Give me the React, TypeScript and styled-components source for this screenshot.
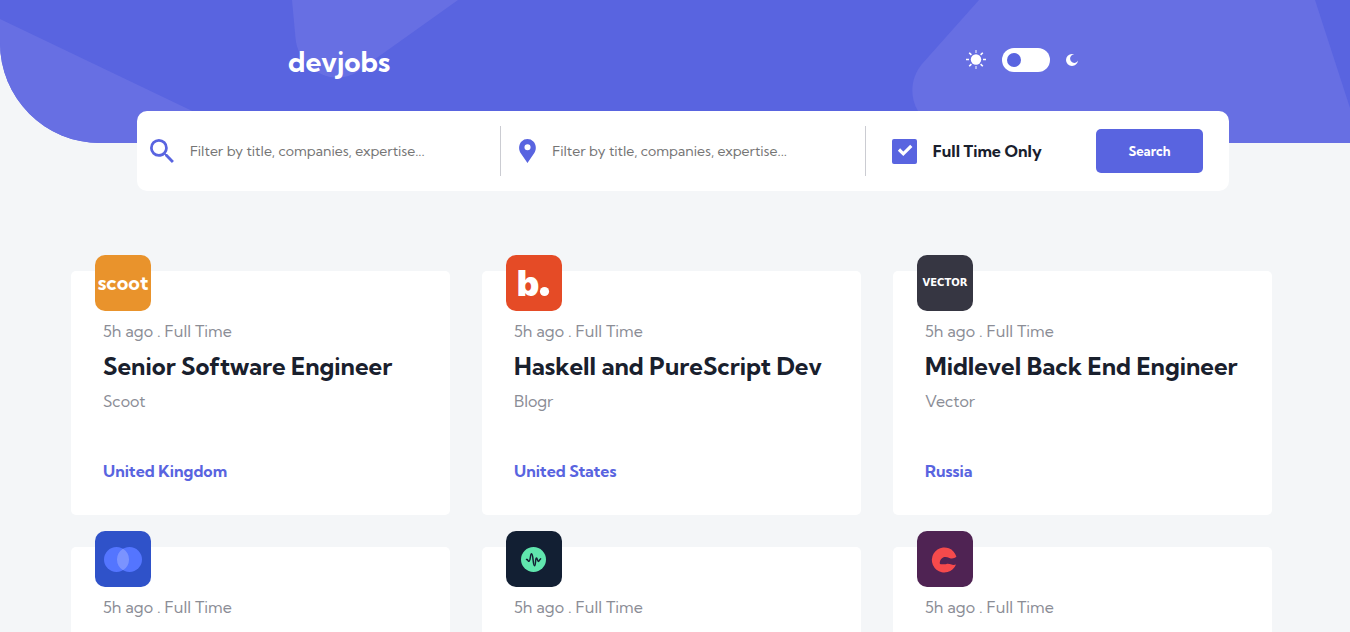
import React, { useState } from "react";
import styled, { createGlobalStyle } from "styled-components";

const GlobalStyle = createGlobalStyle`
  *, *::before, *::after { box-sizing: border-box; }
  body {
    margin: 0;
    background: #f4f6f8;
    color: #19202d;
    font-family: "Kumbh Sans", Lato, "Liberation Sans", sans-serif;
    font-size: 16px;
  }
  h1, h2, p { margin: 0; }
`;

const Page = styled.div`
  min-height: 100vh;
`;

const Header = styled.header`
  position: relative;
  display: flex;
  justify-content: space-between;
  align-items: flex-start;
  height: 143px;
  padding: 44px 272px 0 288px;
  overflow: hidden;
  background: #5964e0;
  border-bottom-left-radius: 100px;
`;

const HeaderPattern = styled.svg`
  position: absolute;
  inset: 0;
  width: 100%;
  height: 100%;
  fill: #676fe3;
`;

const Brand = styled.h1`
  position: relative;
  font-size: 28px;
  line-height: 36px;
  font-weight: 700;
  color: #fff;
`;

const ThemeControl = styled.div`
  position: relative;
  display: flex;
  align-items: center;
  gap: 16px;
  height: 32px;
`;

const Switch = styled.input`
  appearance: none;
  display: flex;
  align-items: center;
  width: 48px;
  height: 24px;
  margin: 0;
  padding: 0 5px;
  border-radius: 12px;
  background: #fff;
  cursor: pointer;

  &::before {
    content: "";
    width: 14px;
    height: 14px;
    border-radius: 50%;
    background: #5964e0;
  }
  &:checked { justify-content: flex-end; }
`;

const SearchBar = styled.form`
  position: relative;
  display: grid;
  grid-template-columns: minmax(0, 1fr) 1px minmax(0, 1fr) 1px minmax(0, 1fr);
  align-items: center;
  height: 80px;
  margin: -32px 121px 0 137px;
  background: #fff;
  border-radius: 10px;
`;

const Divider = styled.span`
  height: 50px;
  background: #cbccd2;
`;

const Field = styled.label<{ $inset: number }>`
  display: flex;
  align-items: center;
  gap: 16px;
  padding-left: ${({ $inset }) => $inset}px;
  svg { flex: none; }
`;

const TextInput = styled.input`
  flex: 1;
  min-width: 0;
  height: 40px;
  padding: 0;
  border: 0;
  outline: 0;
  background: transparent;
  font: inherit;
  font-size: 14px;
  color: #19202d;
  &::placeholder { color: #757575; opacity: 1; }
`;

const Actions = styled.div`
  display: flex;
  align-items: center;
  justify-content: space-between;
  padding: 0 26px;
`;

const CheckLabel = styled.label`
  display: flex;
  align-items: center;
  gap: 16px;
  font-weight: 700;
  line-height: 24px;
  cursor: pointer;
`;

const CheckFrame = styled.span`
  display: grid;
  width: 25px;
  height: 25px;
  > * { grid-area: 1 / 1; }
  svg { pointer-events: none; }
`;

const CheckInput = styled.input`
  appearance: none;
  width: 25px;
  height: 25px;
  margin: 0;
  border-radius: 2px;
  background: #e8e9ed;
  &:checked { background: #5964e0; }
`;

const SearchButton = styled.button`
  width: 107px;
  height: 44px;
  border: 0;
  border-radius: 5px;
  background: #5964e0;
  color: #fff;
  font: inherit;
  font-size: 13px;
  font-weight: 700;
  cursor: pointer;
`;

const JobGrid = styled.main`
  display: grid;
  grid-template-columns: repeat(3, minmax(0, 1fr));
  gap: 32px;
  padding: 80px 78px 32px 71px;
`;

const Card = styled.article`
  position: relative;
  padding: 48px 32px 32px;
  background: #fff;
  border-radius: 5px;
`;

const Badge = styled.div<{ $color: string }>`
  position: absolute;
  top: -16px;
  left: 24px;
  width: 56px;
  height: 56px;
  overflow: hidden;
  border-radius: 10px;
  background: ${({ $color }) => $color};
  svg { display: block; }
`;

const Meta = styled.p`
  color: #8b8d96;
  line-height: 24px;
`;

const Title = styled.h2`
  margin: 8px 0;
  font-size: 24px;
  line-height: 30px;
  font-weight: 700;
`;

const Location = styled.p`
  margin-top: 46px;
  color: #5964e0;
  font-weight: 700;
  line-height: 24px;
`;

const SunIcon = () => (
  <svg width="20" height="20" viewBox="0 0 20 20" aria-hidden="true">
    <circle cx="10" cy="9.5" r="5.2" fill="#fff" />
    <g stroke="#fff" strokeWidth="1.6">
      <path d="M0 9.500h3M17 9.500h3M3.200 2.700l2.200 2.200M16.800 2.700l-2.200 2.200M3.200 16.300l2.200-2.200M16.800 16.300l-2.200-2.200" />
      <path d="M10 0v3M10 16v3" opacity=".6" />
    </g>
  </svg>
);

const MoonIcon = () => (
  <svg width="12" height="12" viewBox="0 0 12 12" aria-hidden="true">
    <path
      fill="#fff"
      d="M6 0c1.100 0 1.800.2 2.400.5C6 .3 4.100 2 4.100 4.600c0 2.500 1.800 4.300 4.100 4.300 1.700 0 3-.9 3.700-2.300C11.800 9.700 9.200 12 6 12a6 6 0 0 1 0-12z"
    />
  </svg>
);

const SearchIcon = () => (
  <svg width="24" height="24" viewBox="0 0 24 24" aria-hidden="true">
    <path
      fill="#5964e0"
      d="M17.112 15.059h-1.088l-.377-.377a8.814 8.814 0 0 0 2.150-5.784A8.898 8.898 0 1 0 8.898 17.800c2.211 0 4.230-.808 5.784-2.143l.377.377v1.081l6.845 6.832 2.040-2.040-6.832-6.848zm-8.214 0A6.160 6.160 0 1 1 8.898 2.737a6.160 6.160 0 0 1 0 12.322z"
    />
  </svg>
);

const PinIcon = () => (
  <svg width="17" height="24" viewBox="0 0 17 24" aria-hidden="true">
    <path
      fill="#5964e0"
      fillRule="evenodd"
      d="M14.358 2.451A8.300 8.300 0 0 0 8.448 0a8.300 8.300 0 0 0-5.911 2.451c-2.922 2.925-3.285 8.427-.785 11.760L8.448 23.900l6.686-9.676c2.509-3.346 2.146-8.848-.776-11.773zM8.526 11.306a3.060 3.060 0 1 1 0-6.120 3.060 3.060 0 0 1 0 6.120z"
    />
  </svg>
);

const CheckIcon = () => (
  <svg width="25" height="25" viewBox="0 0 25 25" fill="none" aria-hidden="true">
    <path d="M7 10.500l4.300 4.300 8-8" stroke="#fff" strokeWidth="3.200" />
  </svg>
);

const Word = styled.text`
  fill: #fff;
  text-anchor: middle;
`;

const ScootLogo = () => (
  <svg width="56" height="56" viewBox="0 0 56 56">
    <Word x="28" y="35" fontFamily="Kumbh Sans, Lato, sans-serif" fontWeight="700" fontSize="20">scoot</Word>
  </svg>
);

const BlogrLogo = () => (
  <svg width="56" height="56" viewBox="0 0 56 56">
    <Word x="22" y="41" fontFamily="Inter, sans-serif" fontWeight="900" fontSize="35">b</Word>
    <circle cx="38.500" cy="36.500" r="4.600" fill="#fff" />
  </svg>
);

const VectorLogo = () => (
  <svg width="56" height="56" viewBox="0 0 56 56">
    <Word x="28" y="31" fontFamily="DejaVu Sans, sans-serif" fontWeight="700" fontSize="10">VECTOR</Word>
  </svg>
);

const CirclesLogo = () => (
  <svg width="56" height="56" viewBox="0 0 56 56">
    <circle cx="21.500" cy="28.500" r="12.500" fill="#5475ff" />
    <circle cx="34.500" cy="28.500" r="12.500" fill="#5475ff" />
    <path d="M28 17.800a12.500 12.500 0 0 1 0 21.400a12.500 12.500 0 0 1 0-21.400z" fill="#7b93ff" />
  </svg>
);

const PulseLogo = () => (
  <svg width="56" height="56" viewBox="0 0 56 56">
    <circle cx="27.500" cy="28.500" r="12.500" fill="#60e6ae" />
    <path
      d="M20.500 28.500c1.200-.8 1.500 2.400 2.700 1.600 1.500-1 1-7.300 2.300-7.300 1.900 0 1.300 11.900 3 11.900 1.500 0 .6-7.800 2-7.800.9 0 .9 3.600 1.900 3.600.9 0 1-2 2.200-2.600"
      fill="none"
      stroke="#121f33"
      strokeWidth="1.500"
      strokeLinecap="round"
    />
  </svg>
);

const RoasterLogo = () => (
  <svg width="56" height="56" viewBox="0 0 56 56">
    <path
      fill="#f54a4c"
      d="M39.400 25.800A12.500 12.500 0 1 0 39 33.500c-3.200 1.300-5.600-.8-8.100-.8-1.100 0-1.700.6-2.800.6h-4.400c-1.400 0-1.100-3.100.3-5 2.300-3.100 5.400-2.600 8.400-1.400 2.700 1.100 4.800.4 7-1.100z"
    />
  </svg>
);

const jobs = [
  { title: "Senior Software Engineer", company: "Scoot", place: "United Kingdom", tint: "#e9932c", Logo: ScootLogo },
  { title: "Haskell and PureScript Dev", company: "Blogr", place: "United States", tint: "#e54b26", Logo: BlogrLogo },
  { title: "Midlevel Back End Engineer", company: "Vector", place: "Russia", tint: "#363642", Logo: VectorLogo },
  { title: "Senior Application Engineer", company: "Office Lite", place: "Japan", tint: "#2f52c9", Logo: CirclesLogo },
  { title: "Remote DevOps Engineer", company: "Pod", place: "Thailand", tint: "#121f33", Logo: PulseLogo },
  { title: "Desktop Support Manager", company: "Creative", place: "Germany", tint: "#4f2353", Logo: RoasterLogo },
];

export default function App() {
  const [dark, setDark] = useState(false);
  const [fullTime, setFullTime] = useState(true);

  return (
    <Page>
      <GlobalStyle />
      <Header>
        <HeaderPattern viewBox="0 0 1350 143" preserveAspectRatio="xMidYMin slice" aria-hidden="true">
          <path d="M0 19L259 143H0z" />
          <path d="M292 0l3.500 38C298 68 332 88 357 72L458 0z" />
          <path d="M979 0L922 64C911 77 909 96 918 111l20 32h412v-35L1315 0z" />
        </HeaderPattern>
        <Brand>devjobs</Brand>
        <ThemeControl>
          <SunIcon />
          <Switch
            type="checkbox"
            role="switch"
            aria-label="Dark mode"
            checked={dark}
            onChange={(e) => setDark(e.target.checked)}
          />
          <MoonIcon />
        </ThemeControl>
      </Header>

      <SearchBar onSubmit={(e) => e.preventDefault()}>
        <Field $inset={13}>
          <SearchIcon />
          <TextInput type="text" aria-label="Title" placeholder="Filter by title, companies, expertise..." />
        </Field>
        <Divider />
        <Field $inset={18}>
          <PinIcon />
          <TextInput type="text" aria-label="Location" placeholder="Filter by title, companies, expertise..." />
        </Field>
        <Divider />
        <Actions>
          <CheckLabel>
            <CheckFrame>
              <CheckInput type="checkbox" checked={fullTime} onChange={(e) => setFullTime(e.target.checked)} />
              <CheckIcon />
            </CheckFrame>
            Full Time Only
          </CheckLabel>
          <SearchButton type="submit">Search</SearchButton>
        </Actions>
      </SearchBar>

      <JobGrid>
        {jobs.map(({ title, company, place, tint, Logo }) => (
          <Card key={title}>
            <Badge $color={tint}>
              <Logo />
            </Badge>
            <Meta>5h ago . Full Time</Meta>
            <Title>{title}</Title>
            <Meta>{company}</Meta>
            <Location>{place}</Location>
          </Card>
        ))}
      </JobGrid>
    </Page>
  );
}
